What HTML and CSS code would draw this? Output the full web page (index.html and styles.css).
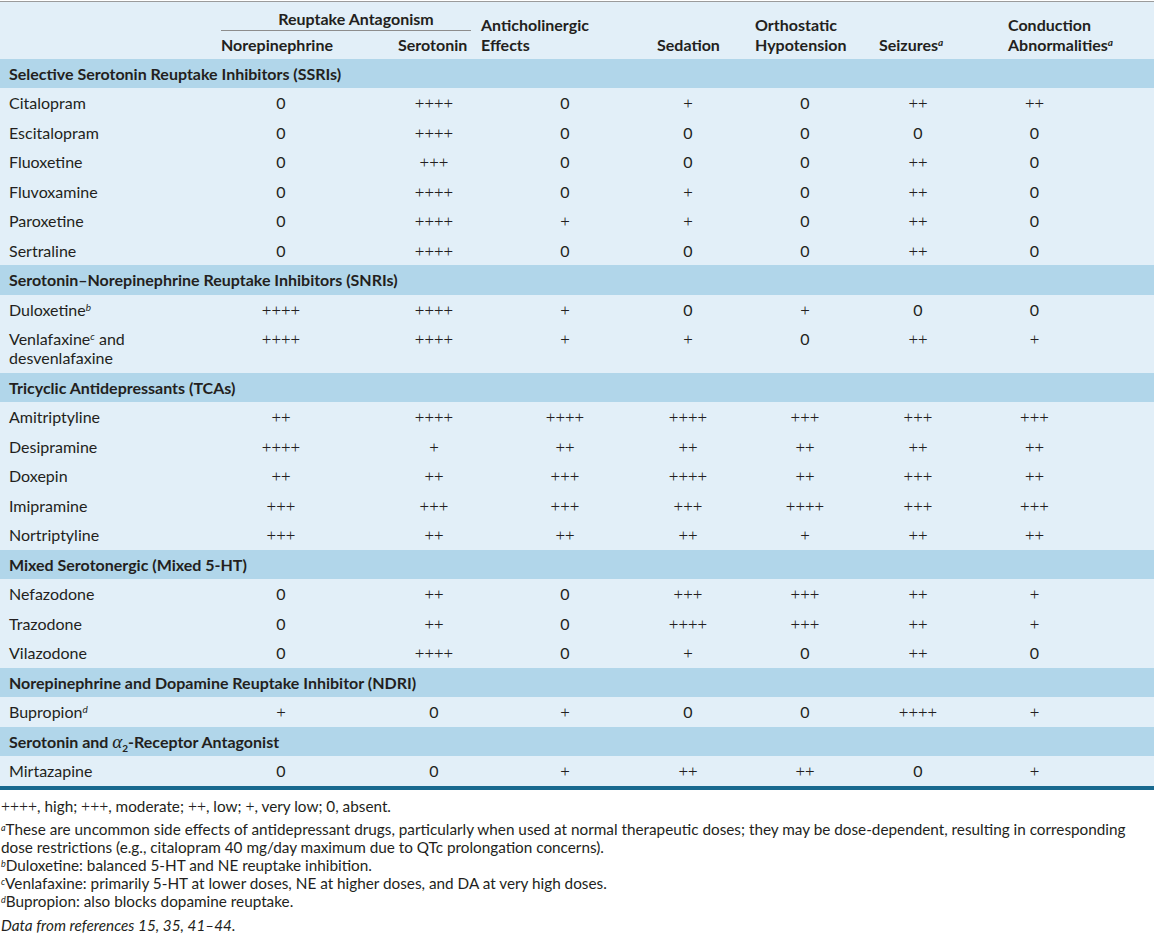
FILE: index.html
```html
<!DOCTYPE html>
<html lang="en">
<head>
<meta charset="utf-8">
<title>Antidepressant side effects</title>
<link rel="stylesheet" href="styles.css">
</head>
<body>
<div class="page">
<table class="tbl">
  <colgroup>
    <col class="w0"><col class="w1"><col class="w2"><col class="w3"><col class="w4"><col class="w5"><col class="w6"><col class="w7">
  </colgroup>
  <thead>
    <tr class="hr1">
      <th class="blank" rowspan="2"></th>
      <th class="grp" colspan="2"><span class="grp-label">Reuptake Antagonism</span></th>
      <th rowspan="2">Anticholinergic<br>Effects</th>
      <th rowspan="2">Sedation</th>
      <th rowspan="2">Orthostatic<br>Hypotension</th>
      <th rowspan="2">Seizures<sup>a</sup></th>
      <th rowspan="2">Conduction<br>Abnormalities<sup>a</sup></th>
    </tr>
    <tr class="hr2">
      <th>Norepinephrine</th>
      <th>Serotonin</th>
    </tr>
  </thead>
  <tbody>
    <tr class="sec"><td colspan="8">Selective Serotonin Reuptake Inhibitors (SSRIs)</td></tr>
    <tr><td>Citalopram</td><td>0</td><td><span class="pl">++++</span></td><td>0</td><td><span class="pl">+</span></td><td>0</td><td><span class="pl">++</span></td><td><span class="pl">++</span></td></tr>
    <tr><td>Escitalopram</td><td>0</td><td><span class="pl">++++</span></td><td>0</td><td>0</td><td>0</td><td>0</td><td>0</td></tr>
    <tr><td>Fluoxetine</td><td>0</td><td><span class="pl">+++</span></td><td>0</td><td>0</td><td>0</td><td><span class="pl">++</span></td><td>0</td></tr>
    <tr><td>Fluvoxamine</td><td>0</td><td><span class="pl">++++</span></td><td>0</td><td><span class="pl">+</span></td><td>0</td><td><span class="pl">++</span></td><td>0</td></tr>
    <tr><td>Paroxetine</td><td>0</td><td><span class="pl">++++</span></td><td><span class="pl">+</span></td><td><span class="pl">+</span></td><td>0</td><td><span class="pl">++</span></td><td>0</td></tr>
    <tr><td>Sertraline</td><td>0</td><td><span class="pl">++++</span></td><td>0</td><td>0</td><td>0</td><td><span class="pl">++</span></td><td>0</td></tr>

    <tr class="sec"><td colspan="8">Serotonin–Norepinephrine Reuptake Inhibitors (SNRIs)</td></tr>
    <tr><td>Duloxetine<sup>b</sup></td><td><span class="pl">++++</span></td><td><span class="pl">++++</span></td><td><span class="pl">+</span></td><td>0</td><td><span class="pl">+</span></td><td>0</td><td>0</td></tr>
    <tr><td>Venlafaxine<sup>c</sup> and<br>desvenlafaxine</td><td><span class="pl">++++</span></td><td><span class="pl">++++</span></td><td><span class="pl">+</span></td><td><span class="pl">+</span></td><td>0</td><td><span class="pl">++</span></td><td><span class="pl">+</span></td></tr>

    <tr class="sec"><td colspan="8">Tricyclic Antidepressants (TCAs)</td></tr>
    <tr><td>Amitriptyline</td><td><span class="pl">++</span></td><td><span class="pl">++++</span></td><td><span class="pl">++++</span></td><td><span class="pl">++++</span></td><td><span class="pl">+++</span></td><td><span class="pl">+++</span></td><td><span class="pl">+++</span></td></tr>
    <tr><td>Desipramine</td><td><span class="pl">++++</span></td><td><span class="pl">+</span></td><td><span class="pl">++</span></td><td><span class="pl">++</span></td><td><span class="pl">++</span></td><td><span class="pl">++</span></td><td><span class="pl">++</span></td></tr>
    <tr><td>Doxepin</td><td><span class="pl">++</span></td><td><span class="pl">++</span></td><td><span class="pl">+++</span></td><td><span class="pl">++++</span></td><td><span class="pl">++</span></td><td><span class="pl">+++</span></td><td><span class="pl">++</span></td></tr>
    <tr><td>Imipramine</td><td><span class="pl">+++</span></td><td><span class="pl">+++</span></td><td><span class="pl">+++</span></td><td><span class="pl">+++</span></td><td><span class="pl">++++</span></td><td><span class="pl">+++</span></td><td><span class="pl">+++</span></td></tr>
    <tr><td>Nortriptyline</td><td><span class="pl">+++</span></td><td><span class="pl">++</span></td><td><span class="pl">++</span></td><td><span class="pl">++</span></td><td><span class="pl">+</span></td><td><span class="pl">++</span></td><td><span class="pl">++</span></td></tr>

    <tr class="sec"><td colspan="8">Mixed Serotonergic (Mixed 5-HT)</td></tr>
    <tr><td>Nefazodone</td><td>0</td><td><span class="pl">++</span></td><td>0</td><td><span class="pl">+++</span></td><td><span class="pl">+++</span></td><td><span class="pl">++</span></td><td><span class="pl">+</span></td></tr>
    <tr><td>Trazodone</td><td>0</td><td><span class="pl">++</span></td><td>0</td><td><span class="pl">++++</span></td><td><span class="pl">+++</span></td><td><span class="pl">++</span></td><td><span class="pl">+</span></td></tr>
    <tr><td>Vilazodone</td><td>0</td><td><span class="pl">++++</span></td><td>0</td><td><span class="pl">+</span></td><td>0</td><td><span class="pl">++</span></td><td>0</td></tr>

    <tr class="sec"><td colspan="8">Norepinephrine and Dopamine Reuptake Inhibitor (NDRI)</td></tr>
    <tr><td>Bupropion<sup>d</sup></td><td><span class="pl">+</span></td><td>0</td><td><span class="pl">+</span></td><td>0</td><td>0</td><td><span class="pl">++++</span></td><td><span class="pl">+</span></td></tr>

    <tr class="sec"><td colspan="8">Serotonin and <i class="alpha">α</i><sub>2</sub>-Receptor Antagonist</td></tr>
    <tr class="last"><td>Mirtazapine</td><td>0</td><td>0</td><td><span class="pl">+</span></td><td><span class="pl">++</span></td><td><span class="pl">++</span></td><td>0</td><td><span class="pl">+</span></td></tr>
  </tbody>
</table>

<div class="notes">
  <p class="key"><span class="pl">++++</span>, high; <span class="pl">+++</span>, moderate; <span class="pl">++</span>, low; <span class="pl">+</span>, very low; 0, absent.</p>
  <p class="fn"><sup>a</sup>These are uncommon side effects of antidepressant drugs, particularly when used at normal therapeutic doses; they may be dose-dependent, resulting in corresponding<br>dose restrictions (e.g., citalopram 40 mg/day maximum due to QTc prolongation concerns).</p>
  <p class="fn"><sup>b</sup>Duloxetine: balanced 5-HT and NE reuptake inhibition.</p>
  <p class="fn"><sup>c</sup>Venlafaxine: primarily 5-HT at lower doses, NE at higher doses, and DA at very high doses.</p>
  <p class="fn"><sup>d</sup>Bupropion: also blocks dopamine reuptake.</p>
  <p class="src">Data from references 15, 35, 41–44.</p>
</div>
</div>
</body>
</html>
```

FILE: styles.css
```css
html, body {
  margin: 0;
  padding: 0;
  background: #ffffff;
}

body {
  font-family: "Lato", "Open Sans", sans-serif;
  color: #231f20;
}

.page {
  width: 1157px;
  padding-top: 1px;
}

.tbl {
  width: 1154px;
  border-collapse: collapse;
  table-layout: fixed;
  border-top: 1px solid #9b9b9b;
  font-size: 16px;
}

.w0 { width: 216px; }
.w1 { width: 177px; }
.w2 { width: 83px; }
.w3 { width: 176px; }
.w4 { width: 98px; }
.w5 { width: 124px; }
.w6 { width: 129px; }
.w7 { width: 151px; }

/* header */
.tbl thead th {
  background: #e2eff8;
  font-weight: 700;
  text-align: left;
  vertical-align: bottom;
  line-height: 20px;
  padding: 0 0 4px 5px;
  white-space: nowrap;
}

.tbl .hr1 { height: 29px; }
.tbl .hr2 { height: 28px; }

.tbl thead .grp {
  padding: 0 5px 0 5px;
  text-align: center;
}

.grp-label {
  display: block;
  line-height: 20px;
  padding-bottom: 1px;
  border-bottom: 1px solid #8d8d8d;
  padding-left: 20px;
}

.tbl sup {
  font-size: 10px;
  font-style: italic;
  font-weight: 400;
  line-height: 0;
  vertical-align: 5px;
}

.tbl thead sup { font-weight: 700; }

/* body */
.tbl tbody td {
  background: #e2eff8;
  line-height: 19px;
  padding: 5.25px 5px;
  text-align: center;
  vertical-align: top;
  white-space: nowrap;
}

.tbl tbody td:first-child {
  text-align: left;
  padding-left: 9px;
}

.tbl tbody td:nth-child(2) { padding-right: 52px; }
.tbl tbody td:nth-child(3) { padding-right: 6px; }
.tbl tbody td:nth-child(4) { padding-right: 3px; }
.tbl tbody td:nth-child(5) { padding-right: 31px; }
.tbl tbody td:nth-child(6) { padding-right: 19px; }
.tbl tbody td:nth-child(7) { padding-right: 46px; }
.tbl tbody td:nth-child(8) { padding-right: 93px; }

.tbl tbody .sec td {
  background: #b1d6ea;
  font-weight: 700;
  text-align: left;
  padding-left: 9px;
}

.tbl tbody .last td {
  border-bottom: 4px solid #18698f;
}

.pl {
  font-family: "Liberation Serif", "Times New Roman", serif;
  font-size: 17px;
  font-weight: 400;
  color: #231f20;
  line-height: 0;
}

.notes .pl {
  font-size: 16px;
}

.alpha {
  font-family: "Liberation Serif", serif;
  font-size: 19px;
  font-weight: 400;
  font-style: italic;
  line-height: 0;
}

.tbl sub {
  font-size: 10px;
  line-height: 0;
  vertical-align: -4px;
}

/* notes */
.notes {
  font-size: 15.3px;
  line-height: 18px;
  padding-left: 1px;
}

.notes p { margin: 0; }

.notes .key { margin: 7px 0 5px; }

.notes sup {
  font-size: 9px;
  font-style: italic;
  line-height: 0;
  vertical-align: 4px;
}

.notes .src {
  font-style: italic;
  margin-top: 6px;
}
```
